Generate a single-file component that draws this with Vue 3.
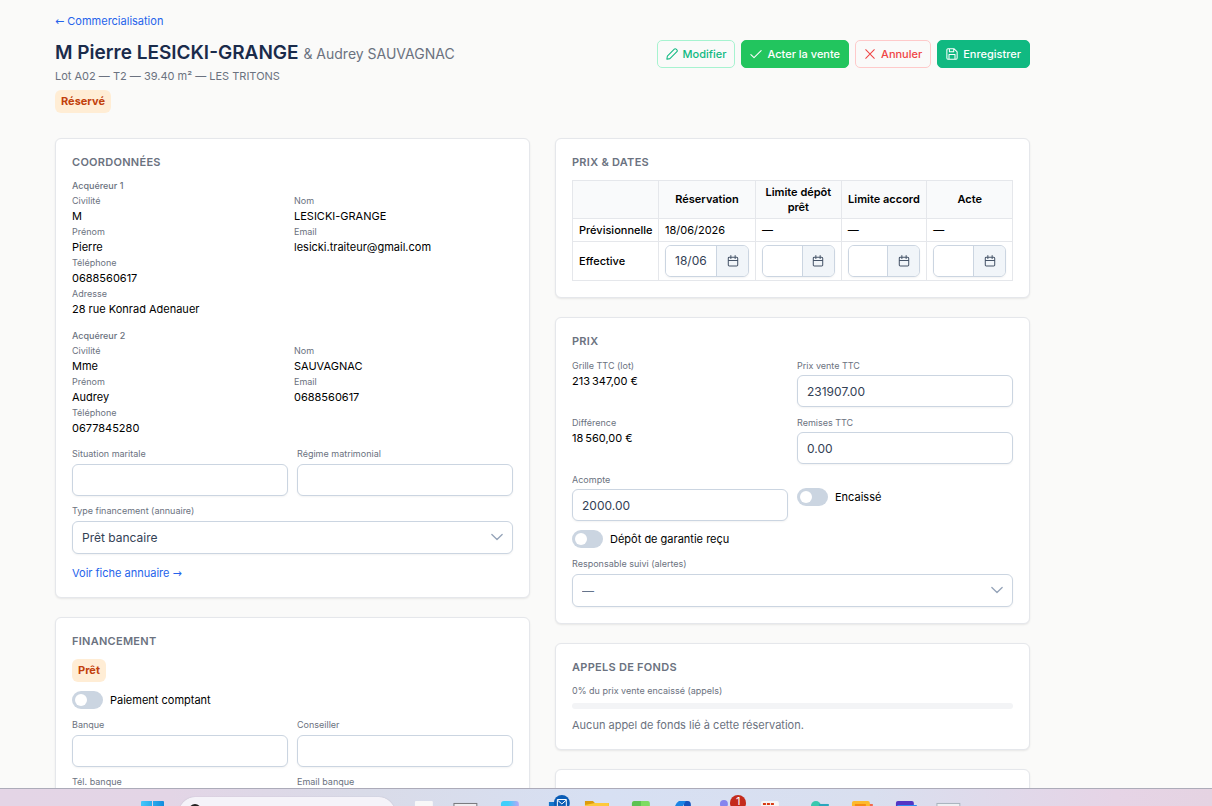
<template>
  <div class="screen">
    <main class="page">
      <div class="container">
        <a href="#" class="link back-link"><span class="arrow">←</span> Commercialisation</a>

        <header class="page-header">
          <div>
            <h1>M Pierre LESICKI-GRANGE <span class="co-buyer">&amp; Audrey SAUVAGNAC</span></h1>
            <p class="lot-info">Lot A02 — T2 — 39.40 m² — LES TRITONS</p>
            <span class="badge">Réservé</span>
          </div>
          <div class="actions">
            <button type="button" class="btn btn-outline-primary">
              <svg viewBox="0 0 14 14" class="icon"><path d="M1 13l.6-3.600L9.700 1.300a1.500 1.500 0 0 1 2.100 0l.9.9a1.500 1.500 0 0 1 0 2.100l-8.100 8.100z" /></svg>
              Modifier
            </button>
            <button type="button" class="btn btn-success">
              <svg viewBox="0 0 14 14" class="icon"><path d="M1 7.600l3.700 3.700L13 3" /></svg>
              Acter la vente
            </button>
            <button type="button" class="btn btn-outline-danger">
              <svg viewBox="0 0 14 14" class="icon"><path d="M2 2l10 10M12 2L2 12" /></svg>
              Annuler
            </button>
            <button type="button" class="btn btn-primary">
              <svg viewBox="0 0 14 14" class="icon"><path d="M2.200 1h7.300L13 4.500v7.300a1.200 1.200 0 0 1-1.200 1.200H2.200A1.200 1.200 0 0 1 1 11.800V2.200A1.200 1.200 0 0 1 2.200 1zM4 1v3.500h5V1M3.500 13V7.500h7V13" /></svg>
              Enregistrer
            </button>
          </div>
        </header>

        <div class="columns">
          <div class="column">
            <section class="card contact">
              <h2>Coordonnées</h2>
              <div v-for="buyer in buyers" :key="buyer.title" class="buyer">
                <h3>{{ buyer.title }}</h3>
                <dl class="info-grid">
                  <div v-for="row in buyer.rows" :key="row.label" :class="{ full: row.full }">
                    <dt>{{ row.label }}</dt>
                    <dd>{{ row.value }}</dd>
                  </div>
                </dl>
              </div>
              <div class="form-grid">
                <div class="field">
                  <label for="marital">Situation maritale</label>
                  <input id="marital" v-model="form.marital" type="text" />
                </div>
                <div class="field">
                  <label for="regime">Régime matrimonial</label>
                  <input id="regime" v-model="form.regime" type="text" />
                </div>
                <div class="field full">
                  <label for="funding">Type financement (annuaire)</label>
                  <div class="select">
                    <select id="funding" v-model="form.funding">
                      <option>Prêt bancaire</option>
                      <option>Comptant</option>
                    </select>
                    <svg viewBox="0 0 14 14" class="chevron"><path d="M1 4l6 6 6-6" /></svg>
                  </div>
                </div>
              </div>
              <a href="#" class="link directory-link">Voir fiche annuaire <span class="arrow">→</span></a>
            </section>

            <section class="card">
              <h2>Financement</h2>
              <span class="badge">Prêt</span>
              <label class="toggle bank-toggle">
                <input v-model="form.cash" type="checkbox" />
                <span>Paiement comptant</span>
              </label>
              <div class="form-grid">
                <div v-for="f in bankFields" :key="f.key" class="field">
                  <label :for="f.key">{{ f.label }}</label>
                  <input :id="f.key" v-model="form[f.key]" type="text" />
                </div>
              </div>
            </section>
          </div>

          <div class="column">
            <section class="card">
              <h2>Prix &amp; dates</h2>
              <table>
                <thead>
                  <tr>
                    <th class="col-label"></th>
                    <th class="col-first">Réservation</th>
                    <th>Limite dépôt prêt</th>
                    <th>Limite accord</th>
                    <th>Acte</th>
                  </tr>
                </thead>
                <tbody>
                  <tr>
                    <th scope="row">Prévisionnelle</th>
                    <td v-for="d in dates" :key="d.key">{{ d.planned }}</td>
                  </tr>
                  <tr>
                    <th scope="row">Effective</th>
                    <td v-for="d in dates" :key="d.key">
                      <div class="datepicker">
                        <input v-model="d.actual" type="text" :aria-label="d.key" />
                        <button type="button" aria-label="Choisir une date">
                          <svg viewBox="0 0 14 14" class="icon"><path d="M2.700 2.500h8.600a1.200 1.200 0 0 1 1.200 1.200v8a1.200 1.200 0 0 1-1.200 1.200H2.700a1.200 1.200 0 0 1-1.200-1.200v-8a1.200 1.200 0 0 1 1.200-1.200zM1.500 6.500h11M4.500.700v3.300M9.500.700v3.300" /></svg>
                        </button>
                      </div>
                    </td>
                  </tr>
                </tbody>
              </table>
            </section>

            <section class="card">
              <h2>Prix</h2>
              <div class="form-grid price-grid">
                <dl>
                  <dt>Grille TTC (lot)</dt>
                  <dd>213&#8239;347,00 €</dd>
                </dl>
                <div class="field">
                  <label for="price">Prix vente TTC</label>
                  <input id="price" v-model="form.price" type="text" />
                </div>
                <dl>
                  <dt>Différence</dt>
                  <dd>18&#8239;560,00 €</dd>
                </dl>
                <div class="field">
                  <label for="discount">Remises TTC</label>
                  <input id="discount" v-model="form.discount" type="text" />
                </div>
                <div class="field">
                  <label for="deposit">Acompte</label>
                  <input id="deposit" v-model="form.deposit" type="text" />
                </div>
                <label class="toggle">
                  <input v-model="form.cashed" type="checkbox" />
                  <span>Encaissé</span>
                </label>
                <label class="toggle full">
                  <input v-model="form.guarantee" type="checkbox" />
                  <span>Dépôt de garantie reçu</span>
                </label>
                <div class="field full">
                  <label for="owner">Responsable suivi (alertes)</label>
                  <div class="select">
                    <select id="owner" v-model="form.owner" class="placeholder">
                      <option value="">—</option>
                    </select>
                    <svg viewBox="0 0 14 14" class="chevron"><path d="M1 4l6 6 6-6" /></svg>
                  </div>
                </div>
              </div>
            </section>

            <section class="card">
              <h2>Appels de fonds</h2>
              <p class="progress-label">{{ progress }}% du prix vente encaissé (appels)</p>
              <div class="progress"><div class="progress-bar" :style="{ width: progress + '%' }"></div></div>
              <p class="empty">Aucun appel de fonds lié à cette réservation.</p>
            </section>

            <section class="card card-empty"></section>
          </div>
        </div>
      </div>
    </main>

    <footer class="taskbar">
      <svg class="start" viewBox="0 0 23 23">
        <defs>
          <linearGradient id="win" x1="0" y1="0" x2="1" y2="0"><stop offset="0" stop-color="#45c8fb" /><stop offset="1" stop-color="#128ddd" /></linearGradient>
        </defs>
        <path fill="url(#win)" d="M1 0h10v11H0V1a1 1 0 0 1 1-1zM12 0h10a1 1 0 0 1 1 1v10H12zM0 12h11v11H0zM12 12h11v11H12z" />
      </svg>
      <div class="search">
        <svg viewBox="0 0 16 16"><circle cx="6" cy="6" r="5" fill="none" stroke="#222" stroke-width="2" /></svg>
      </div>
      <div class="apps">
        <svg viewBox="0 0 44 17"><rect x="13" y="12" width="18" height="18" rx="1" fill="#f8f8f8" /></svg>
        <svg viewBox="0 0 44 17"><rect x="8" y="14.500" width="23" height="16" fill="#efedf0" stroke="#77787c" /></svg>
        <svg viewBox="0 0 44 17">
          <defs><linearGradient id="copilot"><stop offset="0.400" stop-color="#3fcffb" /><stop offset="1" stop-color="#b7a8f7" /></linearGradient></defs>
          <rect x="11" y="12" width="18" height="18" rx="3" fill="url(#copilot)" />
        </svg>
        <svg viewBox="0 0 44 17">
          <path d="M16 13h20v10H16z" fill="#1474c9" />
          <circle cx="29" cy="14" r="8" fill="#0a5cb5" />
          <path d="M24.500 10.500h9v7h-9zM24.500 11l4.500 4 4.500-4" fill="none" stroke="#fff" />
        </svg>
        <svg viewBox="0 0 44 17"><path d="M8 12h8l2 2h14v8H8z" fill="#dd9c0c" /><path d="M8 16l10-2h14v8H8z" fill="#fdc93c" /></svg>
        <svg viewBox="0 0 44 17"><rect x="11" y="12" width="18" height="10" rx="2" fill="#7ddc62" /><path d="M13 12h7v8h-9v-6z" fill="#5cc252" /></svg>
        <svg viewBox="0 0 44 17"><path d="M14 12h9q3 0 3 4v6h-7V12z" fill="#1553bd" /><path d="M14 12h7l-6 10H9q1-8 5-10z" fill="#1b84e4" /></svg>
        <div class="app">
          <svg viewBox="0 0 44 17"><circle cx="16" cy="15" r="4" fill="#8585ee" /></svg>
          <span class="app-badge">1</span>
        </div>
        <svg viewBox="0 0 44 17"><rect x="9" y="12" width="18" height="10" rx="2" fill="#f6f5f5" /><path d="M11 14h3v2h-3zM15 14h3v2h-3zM19 14h3v2h-3zM10 17h13v4H10z" fill="#d83b12" /></svg>
        <svg viewBox="0 0 44 17"><circle cx="20" cy="17" r="5" fill="#39c9ae" /><path d="M23 15h10v5H23z" fill="#2aa7bd" /></svg>
        <svg viewBox="0 0 44 17"><path d="M28 15h5v6h-5z" fill="#f26a4b" /><rect x="12" y="12" width="18" height="10" rx="2" fill="#fdba2d" /><path d="M15 15h11v5H15z" fill="#f78a14" /></svg>
        <svg viewBox="0 0 44 17"><path d="M15 12h14a2 2 0 0 1 2 2v3H13v-3a2 2 0 0 1 2-2z" fill="#5336c4" /><path d="M15 16h19v5H13v-3z" fill="#2b8cf5" /></svg>
        <svg viewBox="0 0 44 17"><rect x="10" y="14.500" width="23" height="16" fill="#eef0f3" stroke="#a9b3bd" /></svg>
      </div>
    </footer>
  </div>
</template>

<script setup>
import { ref } from 'vue'

const buyers = [
  {
    title: 'Acquéreur 1',
    rows: [
      { label: 'Civilité', value: 'M' },
      { label: 'Nom', value: 'LESICKI-GRANGE' },
      { label: 'Prénom', value: 'Pierre' },
      { label: 'Email', value: 'lesicki.traiteur@gmail.com' },
      { label: 'Téléphone', value: '0688560617', full: true },
      { label: 'Adresse', value: '28 rue Konrad Adenauer', full: true }
    ]
  },
  {
    title: 'Acquéreur 2',
    rows: [
      { label: 'Civilité', value: 'Mme' },
      { label: 'Nom', value: 'SAUVAGNAC' },
      { label: 'Prénom', value: 'Audrey' },
      { label: 'Email', value: '0688560617' },
      { label: 'Téléphone', value: '0677845280', full: true }
    ]
  }
]

const bankFields = [
  { key: 'bank', label: 'Banque' },
  { key: 'advisor', label: 'Conseiller' },
  { key: 'bankPhone', label: 'Tél. banque' },
  { key: 'bankEmail', label: 'Email banque' }
]

const dates = ref([
  { key: 'Réservation', planned: '18/06/2026', actual: '18/06/2026' },
  { key: 'Limite dépôt prêt', planned: '—', actual: '' },
  { key: 'Limite accord', planned: '—', actual: '' },
  { key: 'Acte', planned: '—', actual: '' }
])

const form = ref({
  marital: '',
  regime: '',
  funding: 'Prêt bancaire',
  cash: false,
  bank: '',
  advisor: '',
  bankPhone: '',
  bankEmail: '',
  price: '231907.00',
  discount: '0.00',
  deposit: '2000.00',
  cashed: false,
  guarantee: false,
  owner: ''
})

const progress = ref(0)
</script>

<style>
body { background: #fafaf9; }
</style>

<style scoped>
* { box-sizing: border-box; }
.screen { height: 100vh; display: flex; flex-direction: column; overflow: hidden; font-family: Inter, "Liberation Sans", sans-serif; font-size: 11px; line-height: 16px; color: #000; }
.page { flex: 1; min-height: 0; overflow: hidden; padding: 13px 24px 0 55px; }
.container { max-width: 975px; }
h1, h2, h3, p, dl, dt, dd { margin: 0; }
.link { display: block; width: fit-content; color: #2563eb; text-decoration: none; }
.arrow { font-family: "DejaVu Sans", sans-serif; line-height: 10px; }

.page-header { display: flex; justify-content: space-between; align-items: flex-start; margin: 11px 0 25px; }
h1 { font-size: 19px; line-height: 26px; font-weight: 600; color: #1a2b4b; }
.co-buyer { font-size: 14px; line-height: 16px; font-weight: 400; color: #6b7280; }
.lot-info { margin: 2px 0 6px; color: #6b7280; }
.badge { display: block; width: fit-content; padding: 3px 6px 4px; border-radius: 6px; background: #ffedd5; color: #c2410c; font-weight: 700; }
.actions { display: flex; gap: 6px; }
.btn { display: flex; align-items: center; gap: 5px; height: 28px; padding: 0 8px; border: 1px solid; border-radius: 5px; font: 500 11px/16px Inter, sans-serif; white-space: nowrap; cursor: pointer; }
.icon { width: 12px; height: 12px; fill: none; stroke: currentColor; stroke-width: 1.2; stroke-linecap: round; stroke-linejoin: round; }
.btn-outline-primary { background: transparent; border-color: #a7f3d0; color: #10b981; }
.btn-outline-danger { background: transparent; border-color: #fecaca; color: #ef4444; }
.btn-success { background: #22c55e; border-color: #22c55e; color: #fff; }
.btn-primary { background: #10b981; border-color: #10b981; color: #fff; }

.columns { display: grid; grid-template-columns: 1fr 1fr; gap: 25px; align-items: start; }
.column { display: flex; flex-direction: column; gap: 19px; min-width: 0; }
.card { padding: 16px; background: #fff; border: 1px solid #e5e7eb; border-radius: 6px; box-shadow: 0 1px 2px rgba(0, 0, 0, 0.08); }
.card-empty { min-height: 120px; }
h2 { margin-bottom: 11px; font-size: 11px; line-height: 14px; font-weight: 600; letter-spacing: 0.025em; text-transform: uppercase; color: #6b7280; }
.contact h2 { margin-bottom: 9px; }
h3 { font-size: 9px; line-height: 16px; font-weight: 500; color: #6b7280; }
.buyer { margin-bottom: 10px; }
.info-grid { display: grid; grid-template-columns: 1fr 1fr; column-gap: 3px; }
.full { grid-column: 1 / -1; }
dt, .field label, .progress-label { font-size: 9px; line-height: 14px; color: #6b7280; }
dd { padding-bottom: 1px; }

.form-grid { display: grid; grid-template-columns: 1fr 1fr; gap: 8px 9px; }
.field { display: flex; flex-direction: column; gap: 3px; min-width: 0; }
.field input, select, .datepicker { width: 100%; height: 32px; border: 1px solid #cbd5e1; border-radius: 6px; background: #fff; box-shadow: 0 1px 2px rgba(18, 18, 23, 0.05); }
.field input, select, .datepicker input { padding: 0 9px; font: 12px/16px Inter, sans-serif; color: #334155; outline: none; }
.select { position: relative; }
select { display: block; height: 33px; appearance: none; }
select.placeholder { color: #64748b; }
.chevron { position: absolute; right: 10px; top: 10px; width: 12px; height: 12px; fill: none; stroke: #94a3b8; stroke-width: 1.5; stroke-linecap: round; stroke-linejoin: round; pointer-events: none; }
.directory-link { margin-top: 11px; }
.price-grid { row-gap: 9px; }
.price-grid .field:not(.full) { gap: 2px; }

.toggle { display: flex; align-items: center; gap: 7px; }
.toggle input { appearance: none; display: flex; align-items: center; width: 31px; height: 18px; margin: 0; padding: 3px; border-radius: 9px; background: #cbd5e1; }
.toggle input::before { content: ""; width: 12px; height: 12px; border-radius: 50%; background: #fff; }
.toggle input:checked { justify-content: flex-end; background: #10b981; }
.bank-toggle { margin: 9px 0; }

table { width: 100%; table-layout: fixed; border-collapse: collapse; }
th, td { padding: 3px 6px; border: 1px solid #e5e7eb; text-align: left; }
th { font-weight: 500; white-space: nowrap; }
thead th { height: 38px; line-height: 15px; font-weight: 600; text-align: center; background: #f9fafb; white-space: normal; }
.col-label { width: 86px; }
.col-first { width: 97px; }
.datepicker { display: flex; overflow: hidden; }
.datepicker input { flex: 1; min-width: 0; width: 0; border: 0; }
.datepicker button { display: flex; align-items: center; justify-content: center; width: 32px; padding: 0; border: 0; border-left: 1px solid #cbd5e1; background: #f1f5f9; color: #475569; }

.progress-label { line-height: 12px; }
.progress { height: 6px; margin: 6px 0 8px; border-radius: 3px; background: #f3f4f6; overflow: hidden; }
.progress-bar { height: 100%; background: #10b981; }
.empty { color: #6b7280; }

.taskbar { display: flex; align-items: flex-start; flex: none; height: 18px; padding-left: 141px; overflow: hidden; border-top: 1px solid #acabb9; background: linear-gradient(90deg, #e4d5e6 0%, #e3d5e6 14%, #d9dbe8 30%, #d7e0f3 50%, #d9dfef 72%, #e6d4e6 92%, #e5d3e2 100%); }
.start { width: 23px; height: 23px; margin-top: 12px; flex: none; }
.search { flex: none; width: 216px; height: 32px; margin: 8px 7px 0 15px; padding: 7px 10px; border-radius: 16px; background: #f5f3f9; box-shadow: 0 0 1px #a9a5b8; }
.search svg { display: block; width: 16px; height: 16px; }
.apps { display: grid; grid-template-columns: repeat(13, 1fr); width: 569px; }
.apps svg { display: block; width: 100%; height: 17px; }
.app { position: relative; }
.app-badge { position: absolute; top: 6px; right: 6px; width: 16px; height: 16px; padding-top: 1px; border-radius: 50%; background: #c42b1c; color: #fff; font-size: 11px; line-height: 10px; text-align: center; }
</style>
